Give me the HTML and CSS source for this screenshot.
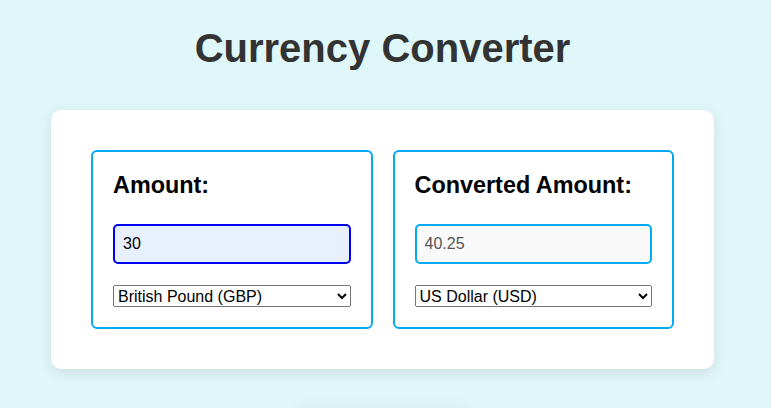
FILE: index.html
```html
<!DOCTYPE html>
<html>
<head>
  <meta charset="UTF-8">
  <title>Currency Converter</title>
  <link rel="stylesheet" href="styles.css">
</head>
<body>
  <h1>Currency Converter</h1>

  <div class="converter">
    <div class="panel">
      <label class="panel-label" for="amount">Amount:</label>
      <input type="text" id="amount" class="amount-input" value="30" autofocus>
      <select id="from-currency" class="currency-select">
        <option value="USD">US Dollar (USD)</option>
        <option value="EUR">Euro (EUR)</option>
        <option value="GBP" selected>British Pound (GBP)</option>
        <option value="JPY">Japanese Yen (JPY)</option>
      </select>
    </div>

    <div class="panel">
      <label class="panel-label" for="converted">Converted Amount:</label>
      <input type="text" id="converted" class="converted-input" value="40.25" readonly>
      <select id="to-currency" class="currency-select">
        <option value="USD" selected>US Dollar (USD)</option>
        <option value="EUR">Euro (EUR)</option>
        <option value="GBP">British Pound (GBP)</option>
        <option value="JPY">Japanese Yen (JPY)</option>
      </select>
    </div>
  </div>

  <div class="rate-note"></div>

  <script>
    const rates = { USD: 1, EUR: 0.92, GBP: 0.7453, JPY: 150.2 };
    const amount = document.getElementById('amount');
    const converted = document.getElementById('converted');
    const fromCurrency = document.getElementById('from-currency');
    const toCurrency = document.getElementById('to-currency');

    // 重新计算
    function convert() {
      const value = parseFloat(amount.value) || 0;
      const usd = value / rates[fromCurrency.value];
      converted.value = (usd * rates[toCurrency.value]).toFixed(2);
    }

    amount.addEventListener('input', convert);
    fromCurrency.addEventListener('change', convert);
    toCurrency.addEventListener('change', convert);
  </script>
</body>
</html>
```

FILE: styles.css
```css
body {
  font-family: Arial, "Liberation Sans", sans-serif;
  background-color: #e0f7fa;
  margin: 0;
  padding: 26px 6px 0 0;
}
h1 {
  color: #333;
  font-size: 40px;
  text-align: center;
  margin: 0 0 39px;
}
.converter {
  display: flex;
  gap: 20px;
  width: 663px;
  box-sizing: border-box;
  margin: 0 auto;
  padding: 40px;
  background-color: white;
  border-radius: 10px;
  box-shadow: 0 4px 14px rgba(0, 0, 0, 0.1);
}
.panel {
  flex: 1;
  border: 2px solid #03a9f4;
  border-radius: 6px;
  padding: 20px;
}
.panel-label {
  display: block;
  font-size: 23.4px;
  font-weight: bold;
  color: #000;
  margin-bottom: 25px;
}
.amount-input,
.converted-input {
  display: block;
  width: 100%;
  height: 40px;
  box-sizing: border-box;
  padding: 0 8px;
  font-family: Arial, "Liberation Sans", sans-serif;
  font-size: 16px;
  border: 2px solid #03a9f4;
  border-radius: 5px;
  margin-bottom: 21px;
  outline: none;
}
.amount-input {
  border-color: #0000ee;
  background-color: #e8f0fe;
  color: #000;
}
.converted-input {
  background-color: #f9f9f9;
  color: #555;
}
.currency-select {
  display: block;
  width: 100%;
  height: 22px;
  font-family: Arial, "Liberation Sans", sans-serif;
  font-size: 16px;
}
.rate-note {
  width: 170px;
  height: 40px;
  margin: 42px auto 0;
  border-radius: 10px;
  box-shadow: 0 0 20px rgba(0, 0, 0, 0.08);
}
```
